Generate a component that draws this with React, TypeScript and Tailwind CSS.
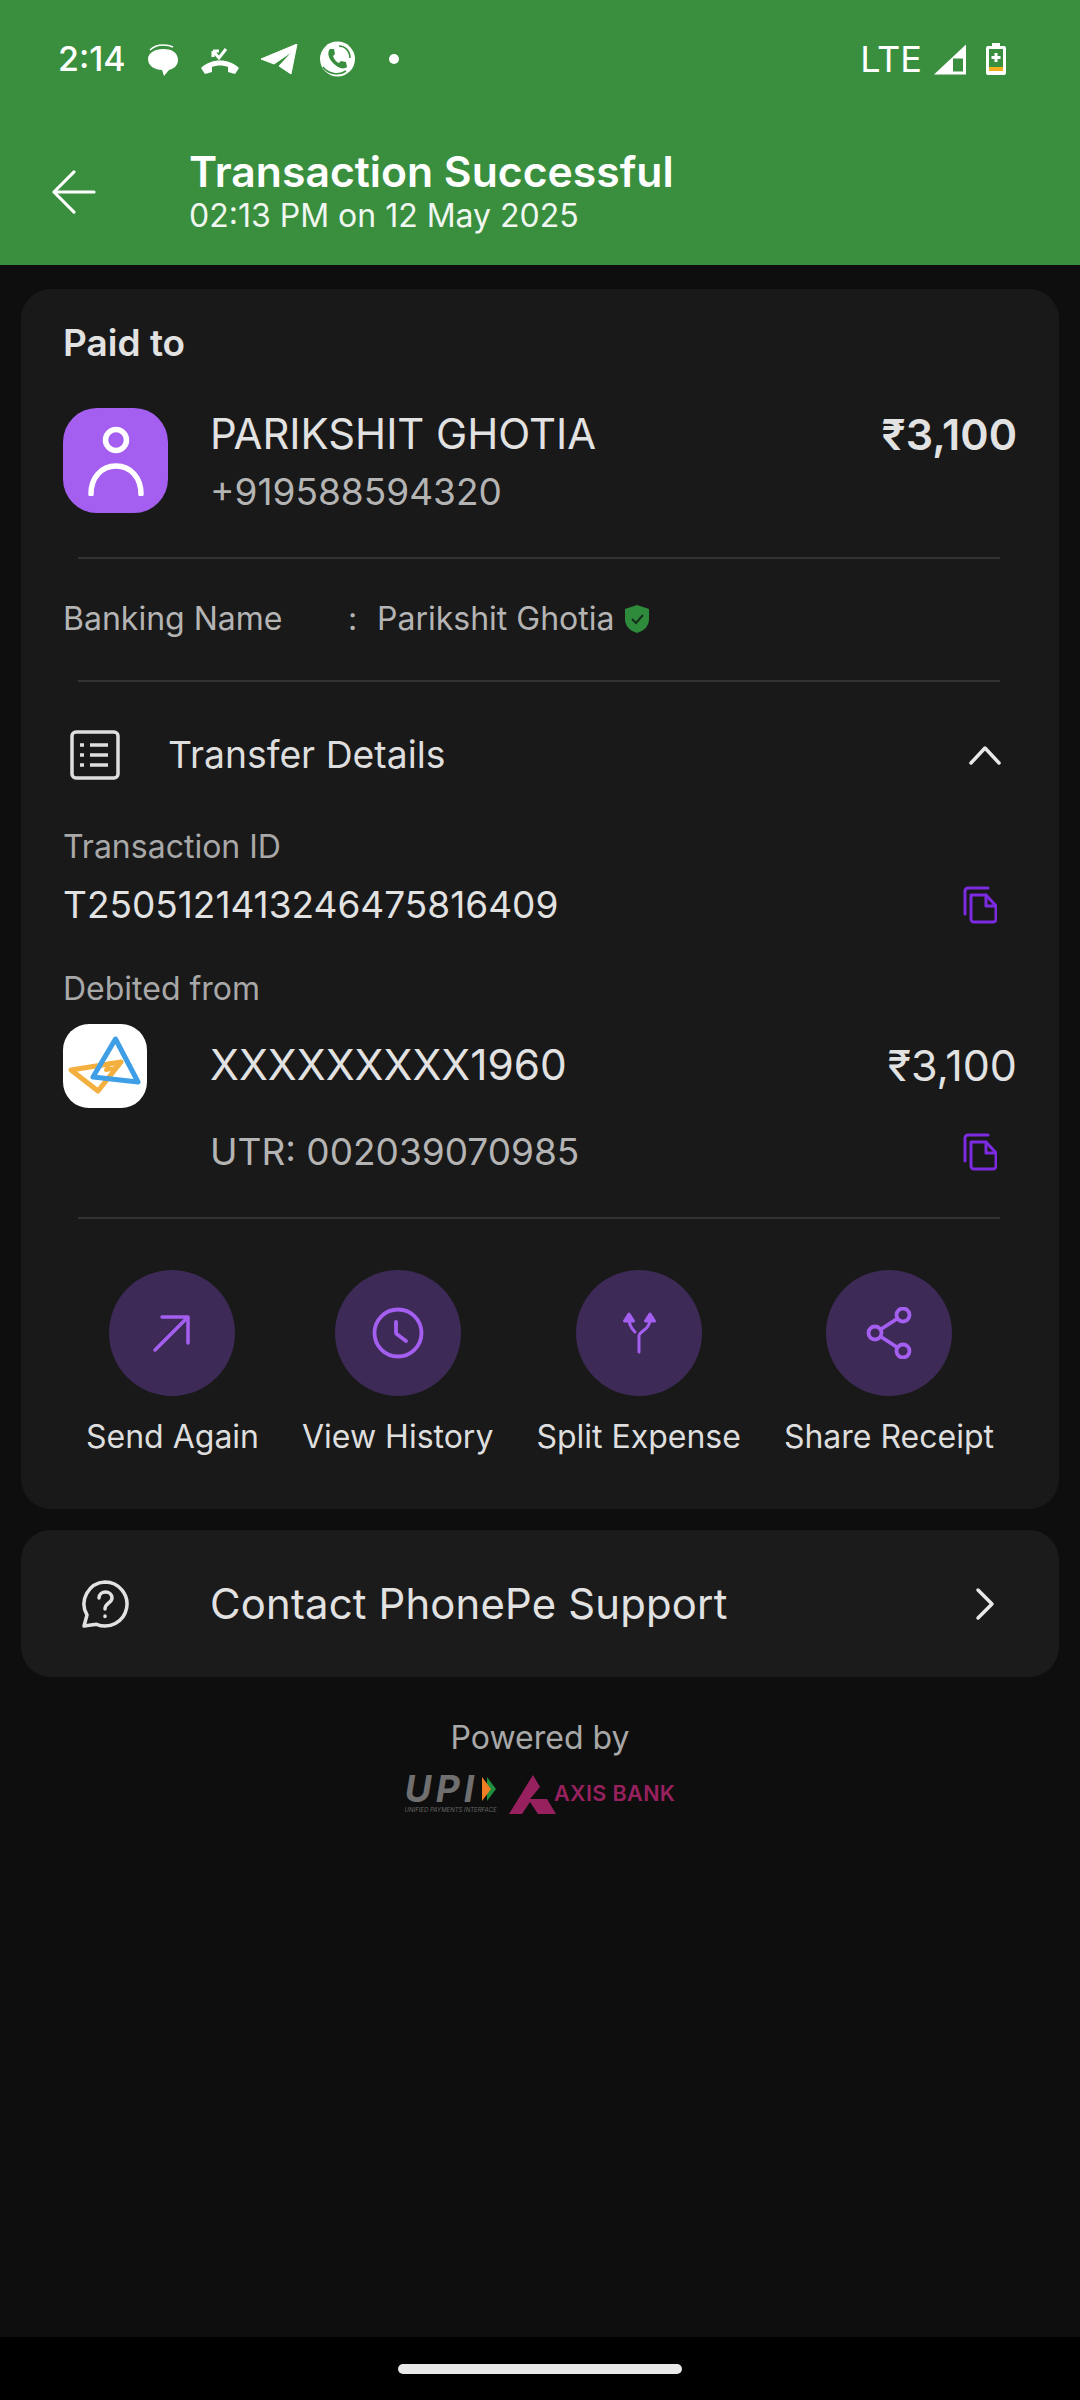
import React from "react";

const Divider = () => <div className="ml-[15px] mr-[17px] h-[2px] bg-[#333333]" />;

const Copy = () => (
  <svg width="34" height="38" viewBox="0 0 34 38" fill="none" stroke="#7c2be0" strokeWidth="3" strokeLinejoin="round" strokeLinecap="round">
    <path d="M2 28V5a3 3 0 0 1 3-3h20" />
    <path d="M8 9h15l10 11v13a3 3 0 0 1-3 3H11a3 3 0 0 1-3-3z" />
    <path d="M23 9v11h10" />
  </svg>
);

const Action = ({ label, children }: { label: string; children: React.ReactNode }) => (
  <div className="flex flex-col items-center">
    <div className="flex h-[126px] w-[126px] items-center justify-center rounded-full bg-[#3d2a56]">{children}</div>
    <div className="mt-[21px] text-[32px] leading-[40px] text-[#dedede] whitespace-nowrap">{label}</div>
  </div>
);

export default function App() {
  return (
    <div className="flex h-[2400px] w-[1080px] flex-col overflow-hidden bg-[#0e0e0e]" style={{ fontFamily: '"Inter", "Noto Sans", sans-serif' }}>
      {/* Header */}
      <div className="h-[265px] shrink-0 bg-[#3a8f3f] text-white">
        <div className="flex h-[118px] items-center pl-[58px] pr-[73px]">
          <span className="w-[89px] text-[34px] font-medium leading-none">2:14</span>
          <svg width="32" height="32" viewBox="0 0 32 32" fill="white" className="mt-[2px]">
            <path d="M16 5c8 0 15 3 15 11 0 6-5 9-9 10l-5 6-2-6C8 26 1 22 1 15 1 9 8 5 16 5z" />
            <path d="M3 6c3-3 8-5 13-5s8 1 10 2" fill="none" stroke="white" strokeWidth="1.6" />
          </svg>
          <svg width="40" height="30" viewBox="0 0 40 30" fill="white" className="ml-[21px]">
            <path d="M1 24c10-10 28-10 38 0l-4 6-7-2v-5c-5-2-11-2-16 0v5l-7 2z" />
            <path d="M26 5 19 14l-6-7M13 7v6M13 7h6" fill="none" stroke="white" strokeWidth="3" />
          </svg>
          <svg width="37" height="31" viewBox="0 0 37 31" fill="white" className="ml-[21px]">
            <path d="M36 0 30 30 18 22l14-15L13 20 0 15z" stroke="white" strokeWidth="1" strokeLinejoin="round" />
          </svg>
          <svg width="37" height="36" viewBox="0 0 37 36" className="ml-[21px]">
            <circle cx="18.5" cy="18" r="17.5" fill="white" />
            <path d="M11 8c-3 3-2 9 3 14s10 7 14 4l-1-5-5-1-2 2c-3-1-5-4-6-7l2-2-1-5z" fill="#3a8f3f" />
            <path d="M20 5c6 0 11 5 11 12M4 26c5 7 16 9 23 4" fill="none" stroke="#3a8f3f" strokeWidth="1.6" />
          </svg>
          <div className="ml-[33px] h-[10px] w-[10px] rounded-full bg-white" />
          <span className="ml-auto text-[36px] font-normal leading-none">LTE</span>
          <svg width="33" height="33" viewBox="0 0 33 32" className="ml-[12px]">
            <path d="M0 31 32 1v30z" fill="white" />
            <path d="M19 15h10v13H19z" fill="#3a8f3f" />
          </svg>
          <svg width="22" height="32" viewBox="0 0 22 32" className="ml-[18px]">
            <path d="M7 0h8v3h4a2 2 0 0 1 2 2v25a2 2 0 0 1-2 2H3a2 2 0 0 1-2-2V5a2 2 0 0 1 2-2h4z" fill="white" />
            <path d="M4 6h14v18H4z" fill="#3a8f3f" />
            <path d="M4 24h14v4H4z" fill="#f2b01e" />
            <path d="M9.500 10h3v3h3v3h-3v3h-3v-3h-3v-3h3z" fill="white" />
          </svg>
        </div>
        <div className="mt-[30px] flex items-center pl-[52px]">
          <svg width="44" height="44" viewBox="0 0 46 46" fill="none" stroke="white" strokeWidth="3.200" strokeLinecap="round" strokeLinejoin="round">
            <path d="M23 2 2 23l21 21M2 23h42" />
          </svg>
          <div className="ml-[93px]">
            <div className="text-[42.700px] font-semibold leading-[48px]">Transaction Successful</div>
            <div className="text-[32px] leading-[40px] text-[#f0f7f0]">02:13 PM on 12 May 2025</div>
          </div>
        </div>
      </div>

      {/* Main card */}
      <div className="mx-[21px] mt-[24px] h-[1220px] rounded-[30px] bg-[#191919] px-[42px] pt-[33px]">
        <div className="text-[37px] font-semibold leading-[42px] text-[#e2e2e2]">Paid to</div>
        <div className="mt-[44px] flex h-[105px] items-start">
          <div className="flex h-[105px] w-[105px] shrink-0 items-center justify-center rounded-[34px] bg-[#a45ff0]">
            <svg width="56" height="70" viewBox="0 0 56 70" fill="none" stroke="white" strokeWidth="5.500">
              <circle cx="28" cy="14" r="10.500" />
              <path d="M3 68c0-16 10-28 25-28s25 12 25 28" strokeLinecap="round" />
            </svg>
          </div>
          <div className="ml-[42px] flex-1">
            <div className="flex items-center justify-between">
              <span className="text-[41.800px] leading-[52px] text-[#e2e2e2]">PARIKSHIT GHOTIA</span>
              <span className="text-[43px] font-semibold leading-[52px] text-[#e2e2e2]">₹3,100</span>
            </div>
            <div className="mt-[8px] text-[37px] leading-[48px] text-[#b4b4b4]">+919588594320</div>
          </div>
        </div>
        <div className="mt-[44px]"><Divider /></div>
        <div className="flex h-[121px] items-center pb-[2px] text-[32px] text-[#b4b4b4]">
          <span className="w-[285px]">Banking Name</span>
          <span className="w-[29px]">:</span>
          <span>Parikshit Ghotia</span>
          <svg width="26" height="30" viewBox="0 0 26 30" className="ml-[10px]">
            <path d="M13 1 25 5v10c0 7-5 12-12 14C6 27 1 22 1 15V5z" fill="#2e8b3c" />
            <path d="M8 15l4 4 7-8" fill="none" stroke="#14301a" strokeWidth="2" />
          </svg>
        </div>
        <Divider />
        <div className="flex h-[148px] items-center pb-[3px]">
          <svg width="50" height="50" viewBox="0 0 50 50" fill="none" stroke="#dedede" strokeWidth="3.500" className="ml-[7px] shrink-0">
            <rect x="2" y="2" width="46" height="46" rx="4" />
            <path d="M20 15h18M20 25h18M20 35h18M10 15h4M10 25h4M10 35h4" />
          </svg>
          <span className="ml-[48px] text-[37.300px] leading-none text-[#dedede]">Transfer Details</span>
          <svg width="34" height="20" viewBox="0 0 34 20" fill="none" stroke="#e8e8e8" strokeWidth="3.500" strokeLinecap="round" strokeLinejoin="round" className="ml-auto mr-[15px]">
            <path d="M3 18 17 3l14 15" />
          </svg>
        </div>
        <div className="mt-[-5px] text-[32px] leading-[44px] text-[#a8a8a8]">Transaction ID</div>
        <div className="mt-[12px] flex h-[48px] items-center justify-between pr-[20px]">
          <span className="text-[37px] leading-[48px] text-[#e2e2e2]">T2505121413246475816409</span>
          <Copy />
        </div>
        <div className="mt-[38px] text-[32px] leading-[44px] text-[#a8a8a8]">Debited from</div>
        <div className="mt-[13px] flex items-start">
          <div className="flex h-[84px] w-[84px] shrink-0 items-center justify-center rounded-[26px] bg-white">
            <svg width="84" height="84" viewBox="0 0 84 84" fill="none" strokeLinejoin="round" strokeLinecap="round">
              <path d="M8 46 58 38 35 67z" stroke="#f4b03e" strokeWidth="5" />
              <path d="M47 39 43 46 53 44" stroke="#f4b03e" strokeWidth="4" />
              <path d="M52.500 15 75 58 30 53z" stroke="#3f9fe6" strokeWidth="5" />
            </svg>
          </div>
          <div className="ml-[63px] flex flex-1 flex-col">
            <div className="mt-[15px] flex items-center justify-between">
              <span className="text-[42.400px] leading-[52px] text-[#e2e2e2]">XXXXXXXXX1960</span>
              <span className="text-[43px] leading-[52px] text-[#e2e2e2]">₹3,100</span>
            </div>
            <div className="mt-[37px] flex h-[48px] items-center justify-between pr-[20px]">
              <span className="text-[37px] leading-[48px] text-[#b4b4b4]">UTR: 002039070985</span>
              <Copy />
            </div>
          </div>
        </div>
        <div className="mt-[41px]"><Divider /></div>
        <div className="mt-[51px] flex justify-center gap-[43px]">
          <Action label="Send Again">
            <svg width="40" height="40" viewBox="0 0 40 40" fill="none" stroke="#a45ff0" strokeWidth="3.500" strokeLinecap="round" strokeLinejoin="round">
              <path d="M3 37 36 4M10 4h26v26" />
            </svg>
          </Action>
          <Action label="View History">
            <svg width="52" height="52" viewBox="0 0 52 52" fill="none" stroke="#a45ff0" strokeWidth="3.800" strokeLinecap="round" strokeLinejoin="round">
              <circle cx="26" cy="26" r="23.500" />
              <path d="M24 15v10q0 2 2 3l8 6" />
            </svg>
          </Action>
          <Action label="Split Expense">
            <svg width="36" height="42" viewBox="0 0 36 42" fill="none" stroke="#a45ff0" strokeWidth="3" strokeLinecap="round" strokeLinejoin="round">
              <path d="M18 40V24c0-5 11-6 11-17" />
              <path d="M14 20C10 16 8 13 8 7" />
              <path d="M8 2 3.500 9h9zM29 2l-4.500 7h9z" fill="#a45ff0" />
            </svg>
          </Action>
          <Action label="Share Receipt">
            <svg width="46" height="52" viewBox="0 0 46 52" fill="none" stroke="#a45ff0" strokeWidth="3.800">
              <circle cx="9" cy="26" r="6.500" />
              <circle cx="37" cy="8" r="6.500" />
              <circle cx="37" cy="44" r="6.500" />
              <path d="M14.500 22.500 31.500 11.500M14.500 29.500 31.500 40.500" />
            </svg>
          </Action>
        </div>
      </div>

      {/* Support card */}
      <div className="mx-[21px] mt-[21px] flex h-[147px] items-center rounded-[30px] bg-[#1b1b1b]">
        <svg width="48" height="48" viewBox="0 0 48 48" fill="none" stroke="#e2e2e2" strokeWidth="3.500" strokeLinecap="round" strokeLinejoin="round" className="ml-[60px] shrink-0">
          <path d="M24 2a22 22 0 1 1-8.500 42.300L3 46l3-11A22 22 0 0 1 24 2z" />
          <path d="M18 18c0-8 13-8 13 0 0 5-7 5-7 11" />
          <path d="M24 36v.5" />
        </svg>
        <span className="ml-[81px] mt-[2px] text-[41.800px] leading-none tracking-[0.2px] text-[#e2e2e2]">Contact PhonePe Support</span>
        <svg width="20" height="34" viewBox="0 0 20 34" fill="none" stroke="#e8e8e8" strokeWidth="3.500" strokeLinecap="round" strokeLinejoin="round" className="ml-auto mr-[64px]">
          <path d="M3 3l14 14L3 31" />
        </svg>
      </div>

      {/* Powered by */}
      <div className="mt-[41px] text-center text-[32px] leading-[40px] text-[#a8a8a8]">Powered by</div>
      <div className="mt-[17px] flex items-start justify-center">
        <div className="flex flex-col items-start">
          <div className="flex h-[28px] items-center">
            <span className="text-[37px] font-bold italic leading-[28px] tracking-[4px] text-[#6f6f6f]">UPI</span>
            <svg width="18" height="26" viewBox="0 0 18 26" className="ml-[1px]">
              <path d="M8 1 17 13 8 25z" fill="#1f8f3f" />
              <path d="M3 1 12 13 3 25z" fill="#ef7f22" />
            </svg>
          </div>
          <span className="mt-[3px] whitespace-nowrap text-[6px] italic leading-[8px] text-[#666666]">UNIFIED PAYMENTS INTERFACE</span>
        </div>
        <svg width="48" height="40" viewBox="0 0 48 40" className="ml-[12px]">
          <path d="M24 0 31 12 21 24H38L47 39H29L21 27 13 39H0z" fill="#97215e" />
        </svg>
        <span className="ml-[-3px] mt-[5px] whitespace-nowrap text-[21.500px] font-semibold leading-[26px] tracking-[0.4px] text-[#97215e]">AXIS BANK</span>
      </div>

      {/* Nav bar */}
      <div className="mt-auto flex h-[63px] shrink-0 items-start justify-center bg-black pt-[27px]">
        <div className="h-[10px] w-[284px] rounded-full bg-[#e8e8e8]" />
      </div>
    </div>
  );
}
